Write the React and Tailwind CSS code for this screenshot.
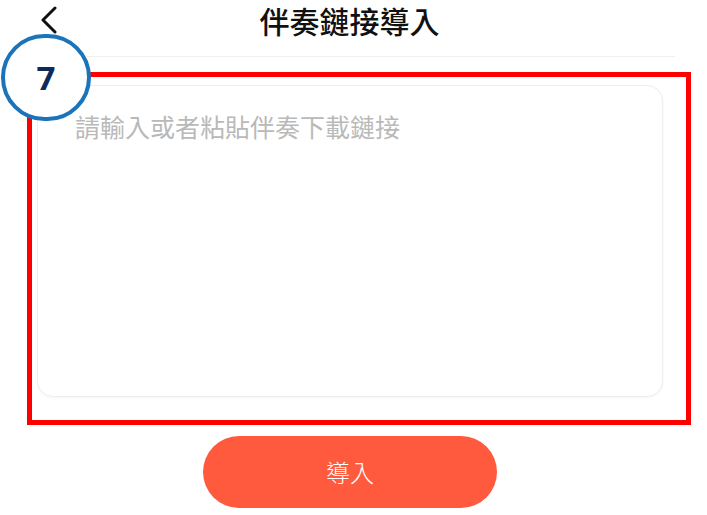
export default function App() {
  return (
    <div className="relative w-[707px] h-[515px] overflow-hidden bg-white font-['Noto_Sans_CJK_TC','Noto_Sans',sans-serif]">
      {/* header */}
      <div className="grid grid-cols-[1fr_auto_1fr] items-center h-[40px]">
        <div className="pl-[40px] flex items-center">
          <svg width="17" height="28" viewBox="0 0 17 28" fill="none">
            <polyline points="15,2 3,14 15,26" stroke="#111" strokeWidth="3" strokeLinecap="round" strokeLinejoin="round" />
          </svg>
        </div>
        <h1 className="pr-[8px] text-[30px] leading-[40px] font-medium text-[#111]">伴奏鏈接導入</h1>
        <div />
      </div>

      <div className="mt-[16px] ml-[37px] w-[638px] h-px bg-[#efefef]" />

      {/* highlighted input area */}
      <div className="mt-[15px] ml-[27px] w-[664px] h-[353px] border-[5px] border-[#ff0000] pt-[8px] pl-[5px]">
        <div className="w-[626px] h-[312px] rounded-[16px] border border-[#eeeeee] shadow-[0_1px_3px_rgba(0,0,0,0.04)] bg-white">
          <textarea
            className="w-full h-full resize-none bg-transparent outline-none pl-[37px] pt-[24px] text-[25px] leading-[32px] text-[#333] placeholder:text-[#b9b9b9]"
            placeholder="請輸入或者粘貼伴奏下載鏈接"
          />
        </div>
      </div>

      <button className="mt-[11px] ml-[203px] w-[294px] h-[72px] rounded-full bg-[#ff5a3d] text-white text-[24px] font-light leading-none flex items-center justify-center">
        導入
      </button>

      {/* step badge */}
      <div className="absolute left-[1px] top-[34px] w-[90px] h-[87px] rounded-full border-[4px] border-[#1b74b9] bg-white flex items-center justify-center">
        <span className="text-[33px] font-bold text-[#0c2a5b] font-['Open_Sans',sans-serif] leading-none">7</span>
      </div>
    </div>
  );
}
